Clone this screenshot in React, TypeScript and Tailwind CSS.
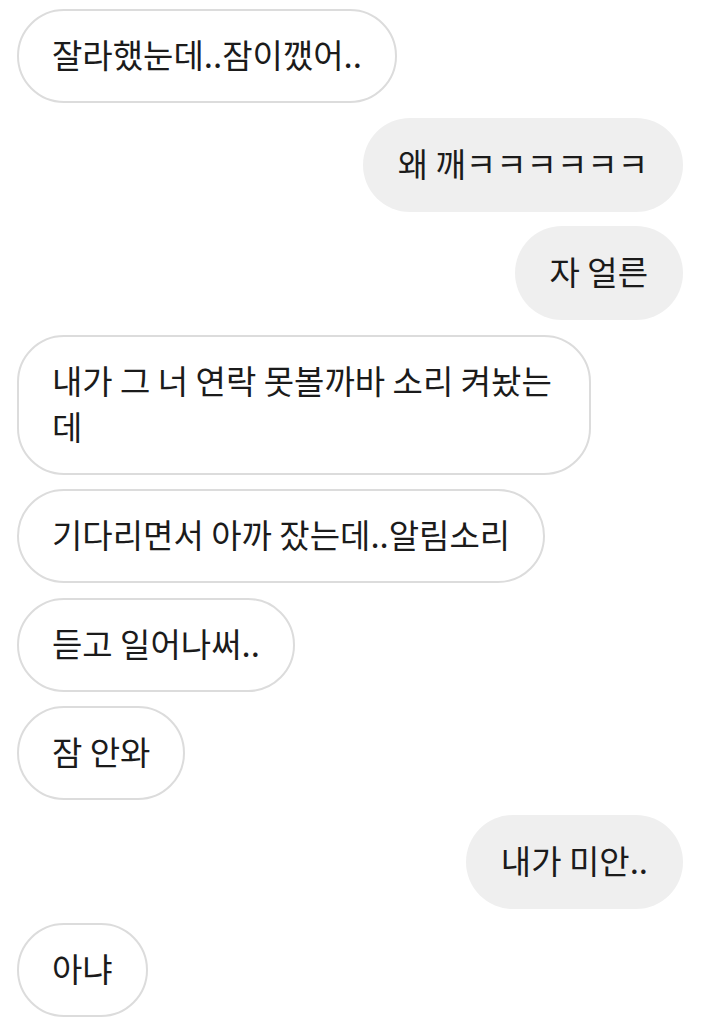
const messages: { text: string[]; mine: boolean; width?: string }[] = [
    { text: ['잘라했눈데..잠이깼어..'], mine: false },
    { text: ['왜 깨ㅋㅋㅋㅋㅋㅋ'], mine: true },
    { text: ['자 얼른'], mine: true },
    { text: ['내가 그 너 연락 못볼까바 소리 켜놨는', '데'], mine: false, width: 'w-[574px]' },
    { text: ['기다리면서 아까 잤는데..알림소리'], mine: false },
    { text: ['듣고 일어나써..'], mine: false },
    { text: ['잠 안와'], mine: false },
    { text: ['내가 미안..'], mine: true },
    { text: ['아냐'], mine: false },
];

function Bubble({ text, mine, width }: { text: string[]; mine: boolean; width?: string }) {
    return (
        <div className={mine ? 'flex justify-end' : 'flex justify-start'}>
            <div
                className={
                    (mine
                        ? 'rounded-[47px] bg-[#efefef] px-[35px] pt-[22px] pb-[26px] text-[33px] leading-[46px] text-[#1b1b1b] whitespace-nowrap'
                        : 'rounded-[47px] border-2 border-[#dcdcdc] bg-white px-[33px] pt-[20px] pb-[24px] text-[33px] leading-[46px] text-[#1b1b1b] whitespace-nowrap') +
                    (width ? ' ' + width : '')
                }
            >
                {text.map((line, i) => (
                    <div key={i}>{line}</div>
                ))}
            </div>
        </div>
    );
}

export default function App() {
    return (
        <div
            className="flex min-h-[1022px] w-[701px] flex-col gap-[14.5px] bg-white pl-[17px] pr-[18px] pt-[9px]"
            style={{ fontFamily: '"Noto Sans CJK KR", "Noto Sans", sans-serif' }}
        >
            {messages.map((m, i) => (
                <Bubble key={i} text={m.text} mine={m.mine} width={m.width} />
            ))}
        </div>
    );
}
